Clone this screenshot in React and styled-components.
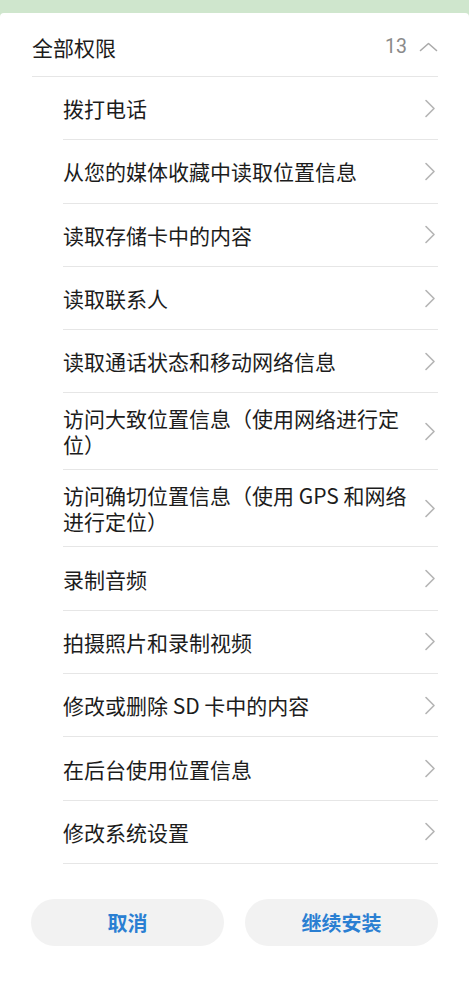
import React from 'react';
import styled, { createGlobalStyle } from 'styled-components';

const GlobalStyle = createGlobalStyle`
  html, body {
    margin: 0;
    padding: 0;
    background: #ffffff;
  }
  * {
    box-sizing: border-box;
  }
`;

const Page = styled.div`
  width: 469px;
  min-height: 981px;
  background-color: #cfe6cd;
  padding-top: 13px;
  font-family: 'Noto Sans CJK SC', 'Noto Sans', sans-serif;
  color: #1c1c1c;
`;

const Sheet = styled.div`
  background: #ffffff;
  min-height: 968px;
  border-radius: 4px 4px 0 0;
  padding: 1px 31px 0 32px;
`;

const Header = styled.div`
  display: flex;
  align-items: center;
  height: 63px;
  border-bottom: 1px solid #e6e6e6;
  padding-top: 3px;
`;

const HeaderTitle = styled.div`
  flex: 1;
  font-size: 21px;
  line-height: 26px;
`;

const Count = styled.span`
  font-family: Roboto, 'Noto Sans', sans-serif;
  font-size: 19.5px;
  color: #8a8a8a;
  margin-right: 12px;
`;

const List = styled.div`
  padding-left: 31px;
`;

const Row = styled.div`
  display: flex;
  align-items: center;
  min-height: 63.3px;
  padding: 12px 0;
  border-bottom: 1px solid #e6e6e6;
`;

const RowText = styled.div`
  flex: 0 0 345px;
  font-size: 21px;
  line-height: 26px;
  color: #1c1c1c;
`;

const ChevronBox = styled.div`
  flex: 1;
  display: flex;
  justify-content: flex-end;
  padding-right: 2px;
`;

const Actions = styled.div`
  display: grid;
  grid-template-columns: 1fr 1fr;
  gap: 21px;
  margin-top: 35px;
  margin-left: -1px;
`;

const ActionButton = styled.button`
  height: 47px;
  border: none;
  border-radius: 24px;
  background: #f2f2f2;
  color: #2a7fd2;
  font-family: 'Noto Sans CJK SC', 'Noto Sans', sans-serif;
  font-size: 20px;
  font-weight: 700;
  cursor: pointer;
`;

const ChevronRight = () => (
  <svg width="12" height="19" viewBox="0 0 12 19" fill="none">
    <path d="M2 1.5 L10 9.5 L2 17.5" stroke="#b4b4b4" strokeWidth="1.6" strokeLinecap="round" strokeLinejoin="round" />
  </svg>
);

const ChevronUp = () => (
  <svg width="19" height="10" viewBox="0 0 19 10" fill="none">
    <path d="M1.5 8.5 L9.5 1.5 L17.5 8.5" stroke="#aaaaaa" strokeWidth="1.6" strokeLinecap="round" strokeLinejoin="round" />
  </svg>
);

const permissions = [
  '拨打电话',
  '从您的媒体收藏中读取位置信息',
  '读取存储卡中的内容',
  '读取联系人',
  '读取通话状态和移动网络信息',
  '访问大致位置信息（使用网络进行定位）',
  '访问确切位置信息（使用 GPS 和网络进行定位）',
  '录制音频',
  '拍摄照片和录制视频',
  '修改或删除 SD 卡中的内容',
  '在后台使用位置信息',
  '修改系统设置',
];

export default function App() {
  return (
    <Page>
      <GlobalStyle />
      <Sheet>
        <Header>
          <HeaderTitle>全部权限</HeaderTitle>
          <Count>13</Count>
          <ChevronUp />
        </Header>
        <List>
          {permissions.map((p) => (
            <Row key={p}>
              <RowText>{p}</RowText>
              <ChevronBox>
                <ChevronRight />
              </ChevronBox>
            </Row>
          ))}
        </List>
        <Actions>
          <ActionButton>取消</ActionButton>
          <ActionButton>继续安装</ActionButton>
        </Actions>
      </Sheet>
    </Page>
  );
}
